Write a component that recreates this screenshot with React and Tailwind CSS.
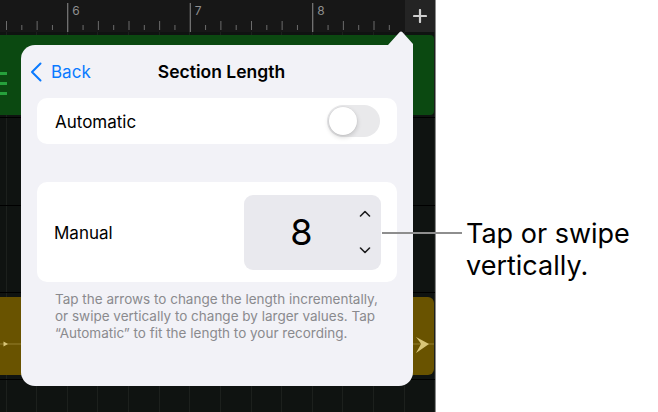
const TICK = 15.3125

const Ruler = () => {
  const ticks = Array.from({ length: 26 }, (_, k) => k)
  return (
    <div className="flex h-[32px]">
      <div className="flex-1 bg-[#171717]">
        <svg width="405" height="32" className="block">
          {ticks.map((k) => {
            const x = 6.5 + k * TICK
            const major = k === 4 || k === 12 || k === 20
            if (major) {
              return (
                <g key={k}>
                  <line x1={x} y1="3" x2={x} y2="32" stroke="#8f8f8f" strokeWidth="1" />
                  <text x={x + 4.5} y="15" fill="#8f8f8f" fontSize="12" fontFamily="Inter, sans-serif">
                    {6 + (k - 4) / 8}
                  </text>
                </g>
              )
            }
            return (
              <line
                key={k}
                x1={x}
                y1={k % 2 === 0 ? 21 : 25}
                x2={x}
                y2="30"
                stroke="#6c6c6c"
                strokeWidth="1"
              />
            )
          })}
        </svg>
      </div>
      <div className="w-[30px] bg-[#242424] flex items-center justify-center">
        <svg width="14" height="14" viewBox="0 0 14 14">
          <path d="M7 1v12M1 7h12" stroke="#cfcfcf" strokeWidth="2.2" strokeLinecap="round" />
        </svg>
      </div>
    </div>
  )
}

const Toggle = () => (
  <div className="w-[53px] h-[32px] rounded-full bg-[#e9e9eb] p-[2px] flex items-center">
    <div className="w-[28px] h-[28px] rounded-full bg-white shadow-[0_2px_5px_rgba(0,0,0,0.18),0_0_0_0.5px_rgba(0,0,0,0.05)]" />
  </div>
)

const Stepper = () => (
  <div className="w-[137px] h-[75px] rounded-[9px] bg-[#e9e9ee] flex items-center">
    <span className="w-[115px] text-center text-[36px] leading-none text-black">8</span>
    <div className="w-[12px] flex flex-col gap-[30px]">
      <svg width="12" height="7" viewBox="0 0 12 7">
        <path d="M1.5 6 L6 1.5 L10.5 6" fill="none" stroke="#1c1c1e" strokeWidth="1.6" strokeLinecap="round" strokeLinejoin="round" />
      </svg>
      <svg width="12" height="7" viewBox="0 0 12 7">
        <path d="M1.5 1 L6 5.5 L10.5 1" fill="none" stroke="#1c1c1e" strokeWidth="1.6" strokeLinecap="round" strokeLinejoin="round" />
      </svg>
    </div>
  </div>
)

const Popover = () => (
  <div className="absolute left-[21px] top-[45px] w-[392px] h-[341px]">
    {/* arrow pointing at the + button */}
    <svg width="30" height="32" viewBox="0 0 30 32" className="absolute left-[362px] top-[-14px]">
      <path d="M0 14 L5 14 L16.5 1.2 Q18 0 19.5 1.2 L30 13 L30 32 L0 32 Z" fill="#f2f2f7" />
    </svg>
    <div className="relative h-full rounded-[14px] rounded-tr-none bg-[#f2f2f7] flex flex-col">
      <div className="grid grid-cols-[1fr_auto_1fr] items-center h-[53px] pl-[9px] pt-[1px]">
        <div className="flex items-center gap-[9px] text-[#0a7aff]">
          <svg width="12" height="20" viewBox="0 0 12 20">
            <path d="M10.5 1.5 L2 10 L10.5 18.5" fill="none" stroke="#0a7aff" strokeWidth="2" strokeLinecap="round" strokeLinejoin="round" />
          </svg>
          <span className="text-[17px] leading-none">Back</span>
        </div>
        <span className="text-[17.5px] font-semibold text-black leading-none">Section Length</span>
        <div />
      </div>
      <div className="px-4">
        <div className="h-[46px] rounded-[10px] bg-white flex items-center justify-between pl-[18px] pr-[17px]">
          <span className="text-[17px] text-black pt-[3px]">Automatic</span>
          <Toggle />
        </div>
        <div className="mt-[38px] h-[100px] rounded-[10px] bg-white flex items-center justify-between pl-[17px] pr-[16px]">
          <span className="text-[17px] text-black pt-[3px]">Manual</span>
          <Stepper />
        </div>
        <p className="mt-[9px] pl-[18px] text-[13.5px] leading-[17px] text-[#8a8a8e] whitespace-nowrap">
          Tap the arrows to change the length incrementally,
          <br />
          or swipe vertically to change by larger values. Tap
          <br />
          “Automatic” to fit the length to your recording.
        </p>
      </div>
    </div>
  </div>
)

const Tracks = () => (
  <div className="flex-1 flex flex-col bg-[#0f1311] bg-[repeating-linear-gradient(90deg,transparent_0_5.6px,#1c201d_5.6px_6.6px,transparent_6.6px_30.625px)]">
    {/* green region */}
    <div className="h-[86px] border-b border-black pt-[3px]">
      <div className="h-[80px] w-[434px] rounded-r-[4px] bg-[#0b4911] flex flex-col gap-[7px] pt-[37px]">
        <div className="w-[7px] h-[3px] bg-[#26a13b]" />
        <div className="w-[7px] h-[3px] bg-[#26a13b]" />
        <div className="w-[7px] h-[3px] bg-[#26a13b]" />
      </div>
    </div>
    <div className="h-[88px] border-b border-black" />
    <div className="h-[87px] border-b border-black" />
    {/* yellow region */}
    <div className="h-[87px] border-b border-black pt-[4px]">
      <div className="h-[78px] w-[434px] rounded-r-[6px] bg-[#695300]">
        <svg width="434" height="78" className="block">
          <line x1="0" y1="47" x2="434" y2="47" stroke="#a08a3a" strokeWidth="0.8" />
          <path d="M3.5 44.5 L8 47 L3.5 49.5 Z" fill="#d8c678" />
          <path d="M416 40 Q420 45 421 47 Q420 49 416 56 L429 47 Z" fill="#d8c678" />
        </svg>
      </div>
    </div>
    <div className="flex-1" />
  </div>
)

export default function App() {
  return (
    <div className="relative flex w-[658px] h-[412px] bg-white overflow-hidden font-['Inter',sans-serif]">
      <div className="relative w-[436px] h-full flex flex-col bg-[#0f1311] border-r border-[#8c8c8c]">
        <Ruler />
        <Tracks />
        <Popover />
      </div>
      <div className="flex-1 pl-[30px] pt-[218px]">
        <p className="text-[27px] leading-[32px] text-black whitespace-nowrap">
          Tap or swipe
          <br />
          vertically.
        </p>
      </div>
      <div className="absolute left-[382px] top-[232px] w-[80px] h-[2px] bg-[#8e8e8e]" />
    </div>
  )
}
